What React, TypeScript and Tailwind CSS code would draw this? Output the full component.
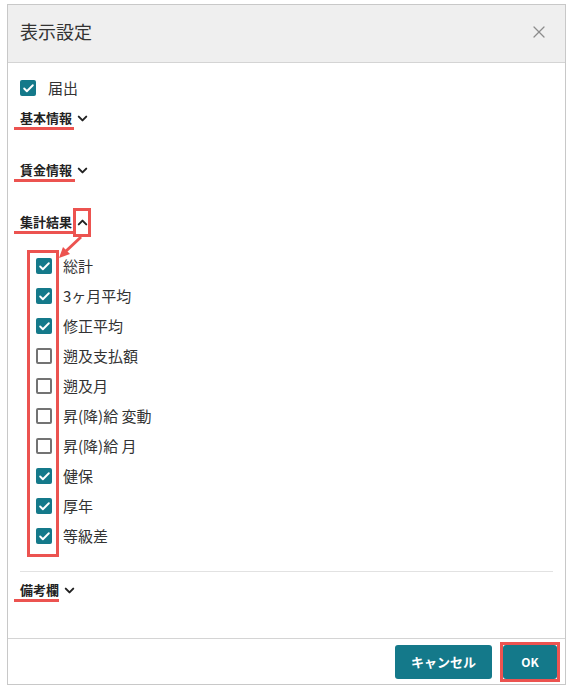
import { ChevronDown, ChevronUp, X, Check } from "lucide-react";

const FONT = { fontFamily: '"Noto Sans CJK JP", "Noto Sans", sans-serif' };

const ITEMS: { label: string; checked: boolean }[] = [
  { label: "総計", checked: true },
  { label: "3ヶ月平均", checked: true },
  { label: "修正平均", checked: true },
  { label: "遡及支払額", checked: false },
  { label: "遡及月", checked: false },
  { label: "昇(降)給 変動", checked: false },
  { label: "昇(降)給 月", checked: false },
  { label: "健保", checked: true },
  { label: "厚年", checked: true },
  { label: "等級差", checked: true },
];

function Box({ checked }: { checked: boolean }) {
  return checked ? (
    <span className="flex h-4 w-4 shrink-0 items-center justify-center rounded-[2px] bg-[#14798a]">
      <Check className="h-[13px] w-[13px] text-white" strokeWidth={3.5} />
    </span>
  ) : (
    <span className="h-4 w-4 shrink-0 rounded-[2px] border-2 border-[#737373] bg-white" />
  );
}

function Heading({
  label,
  open,
  lineW,
}: {
  label: string;
  open?: boolean;
  lineW: string;
}) {
  return (
    <div className="relative flex h-5 items-center gap-[3px]">
      <span className="text-[13px] font-bold text-[#222]">{label}</span>
      {open ? (
        <span className="relative flex items-center">
          <ChevronUp className="h-[15px] w-[15px] text-[#222]" strokeWidth={3.2} />
          <span className="absolute -left-[2px] -top-[7px] h-[29px] w-[18px] border-[3px] border-[#ec5350]" />
        </span>
      ) : (
        <ChevronDown className="h-[15px] w-[15px] text-[#222]" strokeWidth={3.2} />
      )}
      <span
        className={`absolute -left-[6px] -bottom-[2px] h-[3px] bg-[#ec5350] ${lineW}`}
      />
    </div>
  );
}

export default function App() {
  return (
    <div className="relative h-[691px] w-[573px] bg-white pl-[7px] pt-[4px]" style={FONT}>
      <div className="flex h-[681px] w-[559px] flex-col border border-[#c8c8c8] bg-white">
        <div className="flex h-[58px] shrink-0 items-center justify-between border-b border-[#d4d4d4] bg-[#efefef] pb-[4px] pl-[12px] pr-[16px]">
          <span className="text-[18px] text-[#333]">表示設定</span>
          <X className="h-[20px] w-[20px] text-[#8c8c8c]" strokeWidth={1.5} />
        </div>

        <div className="flex flex-1 flex-col px-[12px] pt-[13px]">
          <label className="flex h-6 items-center gap-3">
            <Box checked />
            <span className="text-[15px] text-[#333]">届出</span>
          </label>

          <div className="mt-2">
            <Heading label="基本情報" lineW="w-[60px]" />
          </div>
          <div className="mt-8">
            <Heading label="賃金情報" lineW="w-[61px]" />
          </div>
          <div className="mt-8">
            <Heading label="集計結果" open lineW="w-[60px]" />
          </div>

          <div className="relative mt-[19px] flex flex-col pl-4">
            <span className="pointer-events-none absolute -top-[1px] left-[7px] h-[307px] w-[32px] border-[3px] border-[#ec5350]" />
            {ITEMS.map((it) => (
              <label key={it.label} className="flex h-[30px] items-center gap-[11px]">
                <Box checked={it.checked} />
                <span className="text-[15px] text-[#333]">{it.label}</span>
              </label>
            ))}
          </div>

          <div className="mt-5 border-t border-[#e2e2e2]" />

          <div className="mt-2">
            <Heading label="備考欄" lineW="w-[45px]" />
          </div>
        </div>

        <div className="flex h-[46px] shrink-0 items-center justify-end gap-[11px] border-t border-[#d4d4d4] pr-[8px]">
          <button className="h-[34px] w-[97px] rounded-[3px] bg-[#14798a] text-[13px] font-bold text-white">
            キャンセル
          </button>
          <span className="relative flex">
            <button className="h-[34px] w-[54px] rounded-[3px] bg-[#14798a] text-[12px] font-bold text-white">
              OK
            </button>
            <span className="absolute -inset-[3px] border-[3px] border-[#ec5350]" />
          </span>
        </div>
      </div>

      <svg
        className="pointer-events-none absolute left-0 top-0"
        width="573"
        height="691"
        viewBox="0 0 573 691"
      >
        <line x1="81" y1="237" x2="65" y2="252" stroke="#ec5350" strokeWidth="3" />
        <polygon points="59,258 70,254 63,247" fill="#ec5350" />
      </svg>
    </div>
  );
}
